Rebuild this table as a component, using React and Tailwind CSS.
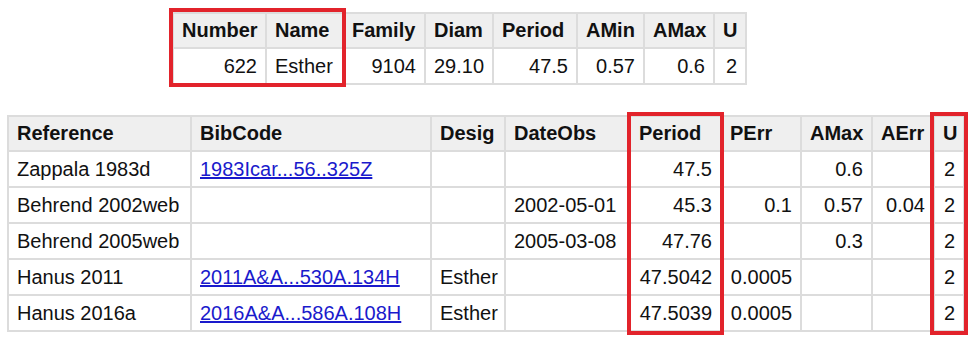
import React from "react";

const topCols = [
  { label: "Number", w: 93, right: true },
  { label: "Name", w: 77 },
  { label: "Family", w: 82, right: true },
  { label: "Diam", w: 68, right: true },
  { label: "Period", w: 84, right: true },
  { label: "AMin", w: 67, right: true },
  { label: "AMax", w: 70, right: true },
  { label: "U", w: 32, right: true },
];
const topRow = ["622", "Esther", "9104", "29.10", "47.5", "0.57", "0.6", "2"];

const refCols = [
  { label: "Reference", w: 183 },
  { label: "BibCode", w: 240 },
  { label: "Desig", w: 74 },
  { label: "DateObs", w: 125 },
  { label: "Period", w: 91, right: true },
  { label: "PErr", w: 80, right: true },
  { label: "AMax", w: 71, right: true },
  { label: "AErr", w: 62, right: true },
  { label: "U", w: 30, right: true },
];

const refRows = [
  ["Zappala 1983d", "1983Icar...56..325Z", "", "", "47.5", "", "0.6", "", "2"],
  ["Behrend 2002web", "", "", "2002-05-01", "45.3", "0.1", "0.57", "0.04", "2"],
  ["Behrend 2005web", "", "", "2005-03-08", "47.76", "", "0.3", "", "2"],
  ["Hanus 2011", "2011A&A...530A.134H", "Esther", "", "47.5042", "0.0005", "", "", "2"],
  ["Hanus 2016a", "2016A&A...586A.108H", "Esther", "", "47.5039", "0.0005", "", "", "2"],
];

const DataTable = ({ cols, rows }) => {
  const total = cols.reduce((s, c) => s + c.w, 0);
  return (
    <table
      className="table-fixed border-collapse border-2 border-[#dcdcdc] text-[20px] leading-[23px] text-[#111]"
      style={{ width: total }}
    >
      <colgroup>
        {cols.map((c) => (
          <col key={c.label} style={{ width: c.w }} />
        ))}
      </colgroup>
      <thead>
        <tr className="bg-[#efefef]">
          {cols.map((c) => (
            <th
              key={c.label}
              className="border-2 border-[#dcdcdc] px-2 py-0 h-[35px] text-left font-bold whitespace-nowrap"
            >
              {c.label}
            </th>
          ))}
        </tr>
      </thead>
      <tbody>
        {rows.map((r, i) => (
          <tr key={i}>
            {r.map((v, j) => (
              <td
                key={j}
                className={`border-2 border-[#dcdcdc] px-2 py-0 h-[36px] whitespace-nowrap ${
                  cols[j].right ? "text-right" : "text-left"
                }`}
              >
                {v && cols[j].label === "BibCode" ? (
                  <a href="#" className="text-[#1a1acc] underline">
                    {v}
                  </a>
                ) : (
                  v
                )}
              </td>
            ))}
          </tr>
        ))}
      </tbody>
    </table>
  );
};

export default function App() {
  return (
    <div className="w-[974px] h-[343px] bg-white font-['Liberation_Sans',Arial,sans-serif] overflow-hidden">
      <div className="pt-[12px] pl-[172px]">
        <div className="relative w-fit">
          <DataTable cols={topCols} rows={[topRow]} />
          <div className="absolute left-[-3px] top-[-4px] w-[177px] h-[79px] border-4 border-[#e2232b]" />
        </div>
      </div>
      <div className="pt-[30px] pl-[7px]">
        <div className="relative w-fit">
          <DataTable cols={refCols} rows={refRows} />
          <div className="absolute left-[620px] top-[-3px] w-[97px] h-[223px] border-4 border-[#e2232b]" />
          <div className="absolute left-[923px] top-[-3px] w-[38px] h-[223px] border-4 border-[#e2232b]" />
        </div>
      </div>
    </div>
  );
}
